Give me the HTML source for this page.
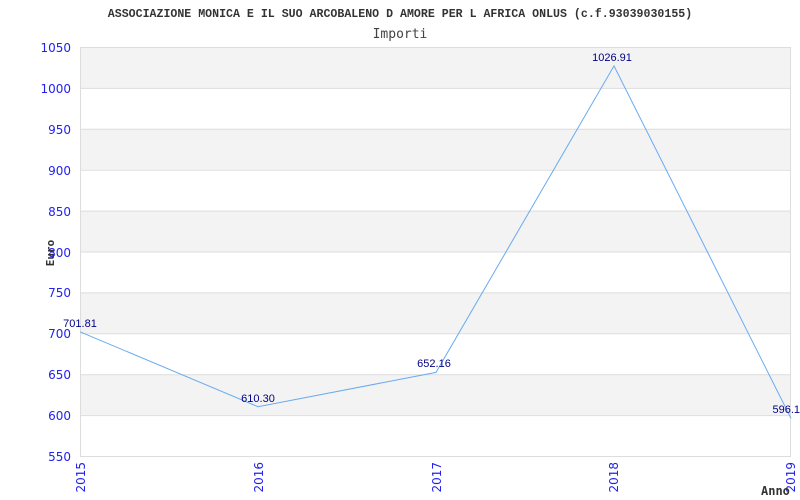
<!DOCTYPE html>
<html><head><meta charset="utf-8"><style>
html,body{margin:0;padding:0;background:#fff;width:800px;height:500px;overflow:hidden}
svg{display:block}
</style></head><body>
<svg width="800" height="500" xmlns="http://www.w3.org/2000/svg">
<text x="400" y="17" text-anchor="middle" font-family="Liberation Mono, DejaVu Sans Mono, monospace" font-weight="bold" font-size="11.6" fill="#333">ASSOCIAZIONE MONICA E IL SUO ARCOBALENO D AMORE PER L AFRICA ONLUS (c.f.93039030155)</text>
<text x="400" y="38" text-anchor="middle" font-family="DejaVu Sans Mono, monospace" font-size="13" fill="#444">Importi</text>
<g fill="#f3f3f3">
<rect x="80" y="47" width="710" height="40.9"/>
<rect x="80" y="128.8" width="710" height="40.9"/>
<rect x="80" y="210.6" width="710" height="40.9"/>
<rect x="80" y="292.4" width="710" height="40.9"/>
<rect x="80" y="374.2" width="710" height="40.9"/>
</g>
<g stroke="#ddd" stroke-width="1">
<line x1="80" y1="47.5" x2="790" y2="47.5"/>
<line x1="80" y1="88.4" x2="790" y2="88.4"/>
<line x1="80" y1="129.3" x2="790" y2="129.3"/>
<line x1="80" y1="170.2" x2="790" y2="170.2"/>
<line x1="80" y1="211.1" x2="790" y2="211.1"/>
<line x1="80" y1="252" x2="790" y2="252"/>
<line x1="80" y1="292.9" x2="790" y2="292.9"/>
<line x1="80" y1="333.8" x2="790" y2="333.8"/>
<line x1="80" y1="374.7" x2="790" y2="374.7"/>
<line x1="80" y1="415.6" x2="790" y2="415.6"/>
<line x1="80" y1="456.5" x2="790" y2="456.5"/>
<line x1="80.5" y1="47" x2="80.5" y2="457"/>
<line x1="790.5" y1="47" x2="790.5" y2="457"/>
</g>
<g font-family="DejaVu Sans, sans-serif" font-size="12" fill="#2222ee" text-anchor="end">
<text x="71" y="52">1050</text><text x="71" y="93">1000</text><text x="71" y="134">950</text>
<text x="71" y="175">900</text><text x="71" y="216">850</text><text x="71" y="257">800</text>
<text x="71" y="297">750</text><text x="71" y="338">700</text><text x="71" y="379">650</text>
<text x="71" y="420">600</text><text x="71" y="461">550</text>
</g>
<g font-family="DejaVu Sans, sans-serif" font-size="12" fill="#2222ee" text-anchor="end">
<text transform="translate(85,462) rotate(-90)">2015</text>
<text transform="translate(263,462) rotate(-90)">2016</text>
<text transform="translate(441,462) rotate(-90)">2017</text>
<text transform="translate(618,462) rotate(-90)">2018</text>
<text transform="translate(795,462) rotate(-90)">2019</text>
</g>
<text transform="translate(54,253) rotate(-90)" text-anchor="middle" font-family="DejaVu Sans Mono, monospace" font-weight="bold" font-size="11" fill="#333">Euro</text>
<text x="761" y="495" font-family="DejaVu Sans Mono, monospace" font-weight="bold" font-size="12" fill="#333">Anno</text>
<polyline fill="none" stroke="#6aaaf0" stroke-width="1" points="80,331.8 258,406.7 436,372.4 614,65.9 791,418.3"/>
<g font-family="Liberation Sans, sans-serif" font-size="11" fill="#000088" text-anchor="middle">
<text x="80" y="327">701.81</text>
<text x="258" y="402">610.30</text>
<text x="434" y="367">652.16</text>
<text x="612" y="61">1026.91</text>
<text x="800" y="413" text-anchor="end">596.1</text>
</g>
</svg>
</body></html>
